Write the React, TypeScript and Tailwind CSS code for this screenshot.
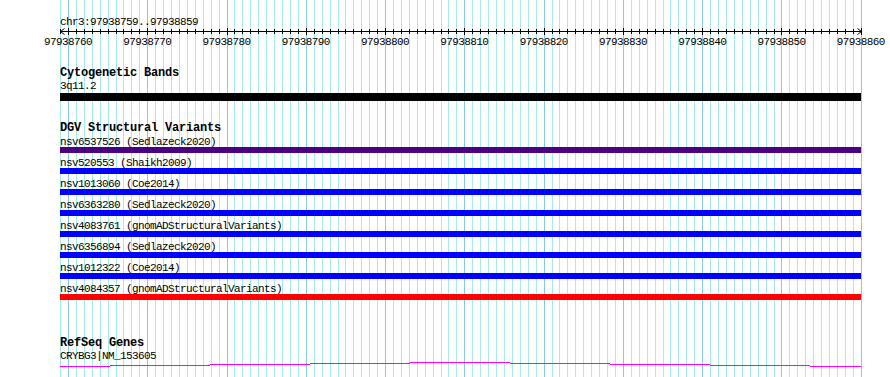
import React from 'react';

// ── scale: 101 bp over ~801 px, starting at x=60 ──
const X0 = 60.07;
const BP = 7.927;
const GRID = Array.from({ length: 102 }, (_, k) => ({ x: Math.round(X0 + k * BP), major: k % 10 === 1 }));
const LABELS = Array.from({ length: 11 }, (_, i) => String(97938760 + i * 10));

const VARIANTS = [
  { name: 'nsv6537526 (Sedlazeck2020)', color: 'bg-[#4b0082]' },
  { name: 'nsv520553 (Shaikh2009)', color: 'bg-[#0000ff]' },
  { name: 'nsv1013060 (Coe2014)', color: 'bg-[#0000ff]' },
  { name: 'nsv6363280 (Sedlazeck2020)', color: 'bg-[#0000ff]' },
  { name: 'nsv4083761 (gnomADStructuralVariants)', color: 'bg-[#0000ff]' },
  { name: 'nsv6356894 (Sedlazeck2020)', color: 'bg-[#0000ff]' },
  { name: 'nsv1012322 (Coe2014)', color: 'bg-[#0000ff]' },
  { name: 'nsv4084357 (gnomADStructuralVariants)', color: 'bg-[#ff0000]' },
];

// gene connector drawn as a stepped hat
const GENE_STEPS = [
  [60, 110, 5], [110, 210, 4], [210, 310, 3], [310, 410, 2], [410, 510, 1],
  [510, 610, 2], [610, 710, 3], [710, 810, 4], [810, 861, 5],
];

const txt = 'h-[10px] leading-[10px] text-[11px] tracking-[-0.6px] text-black whitespace-nowrap';
const title = 'h-[10px] leading-[10px] text-[12px] font-bold tracking-[-0.2px] text-black whitespace-nowrap';

export default function App() {
  return (
    <div className="relative w-[890px] h-[377px] overflow-hidden bg-white" style={{ fontFamily: '"Liberation Mono", "DejaVu Sans Mono", monospace' }}>

      {/* ── grid ── */}
      <svg className="absolute inset-0" width={890} height={377}>
        {GRID.map(g => (
          <rect key={g.x} x={g.x} y={0} width={1} height={377} fill={g.major ? '#86c9ef' : '#a8eaf1'} />
        ))}
      </svg>

      <div className="relative pl-[60px] pt-[17px]">
        {/* ── ruler ── */}
        <div className={txt}>chr3:97938759..97938859</div>
        <svg width={803} height={9} className="block">
          <rect x={0} y={4} width={802} height={1} fill="#000" />
          {GRID.map(g => (
            <rect key={g.x} x={g.x - 60} y={g.major ? 1 : 2} width={1} height={g.major ? 7 : 5} fill="#000" />
          ))}
          <path d="M0.5 4.5 L4.5 1.5 M0.5 4.5 L4.5 7.5 M801.5 4.5 L797.5 1.5 M801.5 4.5 L797.5 7.5" stroke="#000" strokeWidth={1} fill="none" />
        </svg>
        <div className="flex mt-[1px] ml-[-31.6px]">
          {LABELS.map(l => (
            <div key={l} className={`${txt} w-[79.27px] shrink-0 text-center`}>{l}</div>
          ))}
        </div>

        {/* ── Cytogenetic Bands ── */}
        <div className={`${title} mt-[21px]`}>Cytogenetic Bands</div>
        <div className={`${txt} mt-[3px]`}>3q11.2</div>
        <div className="mt-[2px] h-[8px] w-[801px] bg-black" />

        {/* ── DGV Structural Variants ── */}
        <div className={`${title} mt-[22px]`}>DGV Structural Variants</div>
        <div className="mt-[4px] flex flex-col gap-[5px]">
          {VARIANTS.map(v => (
            <div key={v.name}>
              <div className={txt}>{v.name}</div>
              <div className={`h-[6px] w-[801px] ${v.color}`} />
            </div>
          ))}
        </div>

        {/* ── RefSeq Genes ── */}
        <div className={`${title} mt-[38px]`}>RefSeq Genes</div>
        <div className={`${txt} mt-[3px]`}>CRYBG3|NM_153605</div>
        <svg width={803} height={7} className="block">
          {GENE_STEPS.map(([a, b, y]) => (
            <rect key={a} x={a - 60} y={y} width={b - a} height={1} fill="#ff00ff" />
          ))}
        </svg>
      </div>
    </div>
  );
}
